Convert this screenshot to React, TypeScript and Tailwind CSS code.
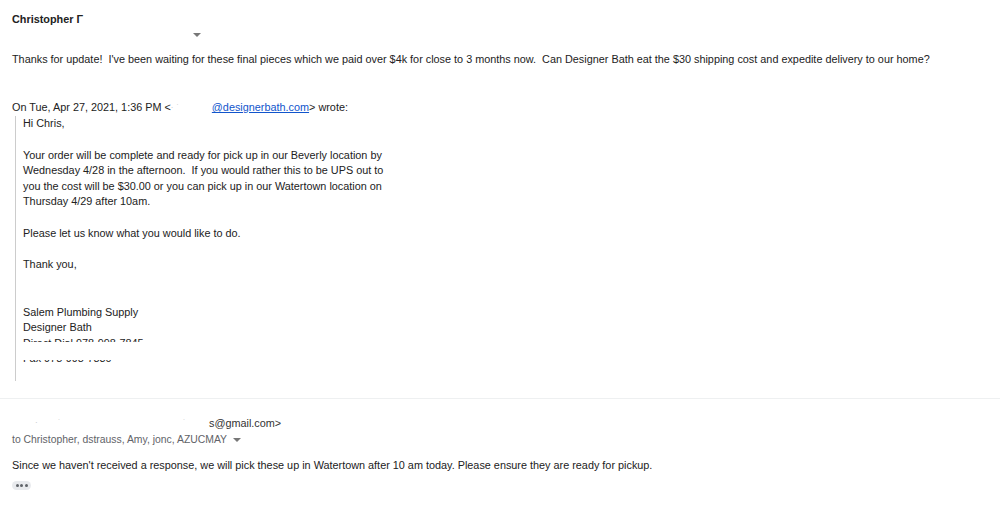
import React from "react";

const Caret = ({ className = "" }: { className?: string }) => (
  <svg width="8" height="4" viewBox="0 0 8 4" className={className}>
    <path d="M0 0 L8 0 L4 4 Z" fill="#777" />
  </svg>
);

export default function App() {
  return (
    <div
      className="w-[1000px] h-[506px] bg-white text-[#222] overflow-hidden"
      style={{ fontFamily: '"Liberation Sans", Arial, sans-serif' }}
    >
      <div className="px-3 pt-[12px]">
        <div className="text-[10.85px] font-bold leading-[14px] text-[#222]">Christopher Γ</div>
        <div className="h-[14px] flex items-center pl-[181px] pt-[4px]">
          <Caret />
        </div>
        <div className="mt-[12px] text-[10.85px] leading-[15px] whitespace-pre">
          Thanks for update!  I've been waiting for these final pieces which we paid over $4k for close to 3 months now.  Can Designer Bath eat the $30 shipping cost and expedite delivery to our home?
        </div>
        <div className="mt-[33px] text-[10.85px] leading-[15px] whitespace-pre flex items-center">
          <span>On Tue, Apr 27, 2021, 1:36 PM &lt;</span>
          <span className="inline-flex items-center gap-[3px] w-[41px] text-[#bbb] text-[8px]">
            <span>·</span>
            <span>˙</span>
          </span>
          <span className="text-[#1155cc] underline">@designerbath.com</span>
          <span>&gt; wrote:</span>
        </div>
        <div className="ml-[3px] mt-[1px] border-l border-[#ccc] pl-[7px] h-[265px] text-[10.85px] leading-[15.5px]">
          <div>Hi Chris,</div>
          <div className="h-[16px]" />
          <div>Your order will be complete and ready for pick up in our Beverly location by</div>
          <div className="whitespace-pre">Wednesday 4/28 in the afternoon.  If you would rather this to be UPS out to</div>
          <div>you the cost will be $30.00 or you can pick up in our Watertown location on</div>
          <div>Thursday 4/29 after 10am.</div>
          <div className="h-[16px]" />
          <div>Please let us know what you would like to do.</div>
          <div className="h-[16px]" />
          <div>Thank you,</div>
          <div className="h-[32px]" />
          <div>Salem Plumbing Supply</div>
          <div>Designer Bath</div>
          <div className="h-[6px] overflow-hidden">
            <div className="whitespace-nowrap">Direct Dial 978-998-7845</div>
          </div>
          <div className="h-[18px]" />
          <div className="h-[3px] overflow-hidden relative">
            <div className="absolute -top-[9px] left-0 whitespace-nowrap">Fax 978-998-7830</div>
          </div>
        </div>
      </div>
      <div className="mt-[17px] border-t border-[#eef0f1]" />
      <div className="px-3 pt-[17px]">
        <div className="flex items-center h-[14px] text-[10.85px] text-[#333]">
          <span className="w-[23px]" />
          <span className="text-[#bbb] text-[8px] w-[23px]">·</span>
          <span className="text-[#bbb] text-[8px] w-[125px]">˙</span>
          <span className="text-[#bbb] text-[8px] w-[26px]">˙</span>
          <span>s@gmail.com&gt;</span>
        </div>
        <div className="mt-[3px] flex items-center gap-[6px] text-[10.4px] leading-[14px] text-[#5f6368]">
          <span>to Christopher, dstrauss, Amy, jonc, AZUCMAY</span>
          <Caret />
        </div>
        <div className="mt-[11px] text-[10.85px] leading-[15px]">
          Since we haven't received a response, we will pick these up in Watertown after 10 am today. Please ensure they are ready for pickup.
        </div>
        <div className="mt-[8px] w-[19px] h-[9px] rounded-full bg-[#e8eaed] flex items-center justify-center gap-[1.5px]">
          <span className="w-[3px] h-[3px] rounded-full bg-[#5f6368]" />
          <span className="w-[3px] h-[3px] rounded-full bg-[#5f6368]" />
          <span className="w-[3px] h-[3px] rounded-full bg-[#5f6368]" />
        </div>
      </div>
    </div>
  );
}
